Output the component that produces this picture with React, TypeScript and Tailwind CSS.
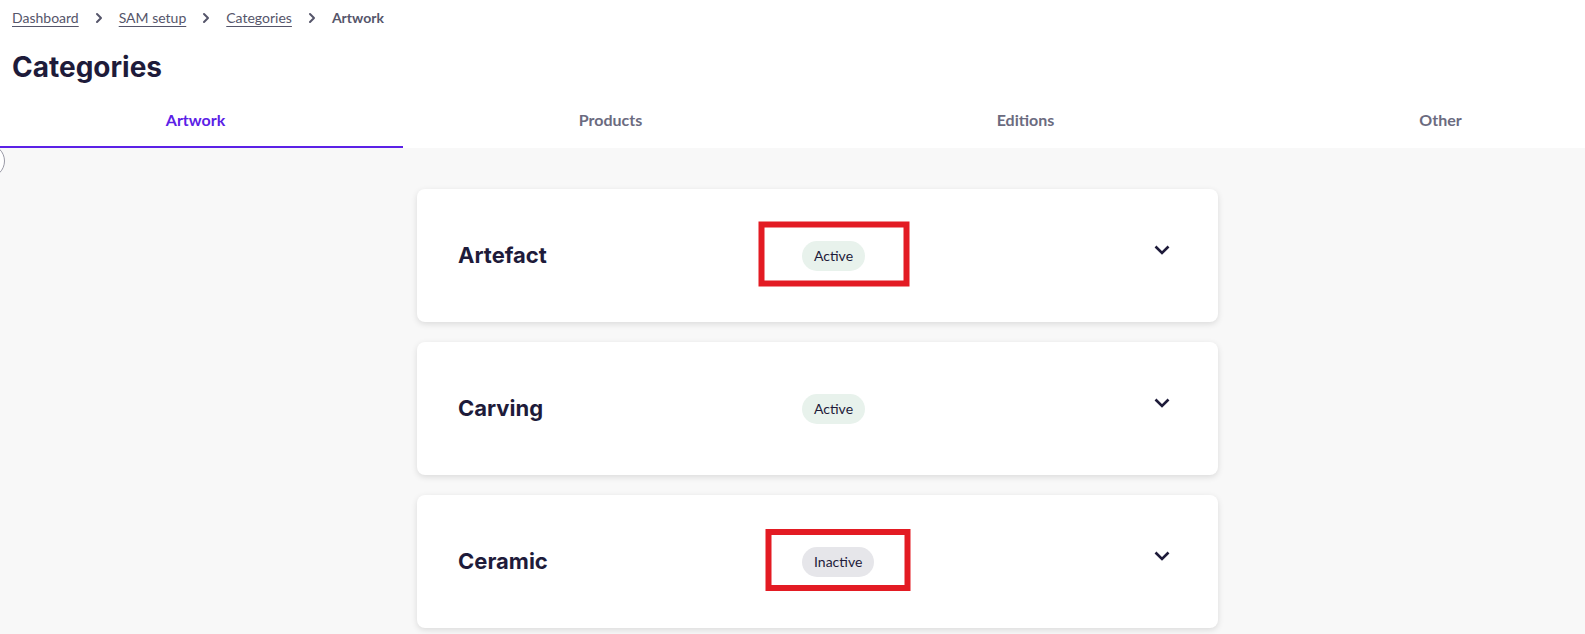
import { ChevronRight } from 'lucide-react';

type Category = {
  name: string;
  active: boolean;
  flagged?: boolean;
};

const crumbs = ['Dashboard', 'SAM setup', 'Categories'];
const tabs = ['Artwork', 'Products', 'Editions', 'Other'];

const categories: Category[] = [
  { name: 'Artefact', active: true, flagged: true },
  { name: 'Carving', active: true },
  { name: 'Ceramic', active: false, flagged: true },
];

function StatusBadge({ active }: { active: boolean }) {
  return (
    <span
      className={
        active
          ? 'inline-flex h-[30px] items-center rounded-full bg-[#e8f2ec] px-[12px] text-[14px] text-[#1e1b3a]'
          : 'inline-flex h-[30px] items-center rounded-full bg-[#e6e6ea] px-[12px] text-[14px] text-[#1e1b3a]'
      }
    >
      {active ? 'Active' : 'Inactive'}
    </span>
  );
}

function CategoryCard({ category }: { category: Category }) {
  return (
    <div className="flex h-[133px] w-[801px] items-center rounded-lg bg-white pl-[41px] pr-[48px] shadow-[0_2px_6px_rgba(0,0,0,0.12)]">
      <div className="w-[344px] text-[22px] font-bold text-[#1e1b3a] [font-family:Inter,sans-serif]">
        {category.name}
      </div>
      <div className="relative">
        <StatusBadge active={category.active} />
        {/* highlight frame drawn around the status */}
        {category.flagged &&
          (category.active ? (
            <div className="pointer-events-none absolute left-1/2 top-1/2 mt-[-2px] h-[65px] w-[151px] -translate-x-1/2 -translate-y-1/2 border-[6px] border-[#e31b23]" />
          ) : (
            <div className="pointer-events-none absolute left-1/2 top-1/2 mt-[-2px] h-[62px] w-[145px] -translate-x-1/2 -translate-y-1/2 border-[6px] border-[#e31b23]" />
          ))}
      </div>
      <div className="flex-1" />
      <div className="pb-[11px]">
        <svg width="16" height="10" viewBox="0 0 16 10" fill="none">
          <path d="M1.5 1.5 L8 8 L14.5 1.5" stroke="#1e1b3a" strokeWidth="2.6" />
        </svg>
      </div>
    </div>
  );
}

export default function App() {
  return (
    <div className="relative min-h-screen w-[1585px] overflow-hidden bg-[#f8f8f8] [font-family:Lato,sans-serif]">
      <div className="bg-white">
        <nav className="flex items-center px-[12px] pt-[8px] text-[14px] leading-[20px] text-[#55556a]">
          {crumbs.map((c) => (
            <span key={c} className="flex items-center">
              <span className="underline underline-offset-[3px]">{c}</span>
              <ChevronRight className="mx-[12px] h-[16px] w-[16px] text-[#55556a]" strokeWidth={3} />
            </span>
          ))}
          <span className="font-bold">Artwork</span>
        </nav>
        <h1 className="mt-[21px] px-[12px] text-[28px] leading-[36px] font-bold text-[#1e1b3a] [font-family:Inter,sans-serif]">
          Categories
        </h1>
        <div className="mt-[8px] flex h-[55px] -ml-[12px]">
          {tabs.map((t, i) => (
            <div
              key={t}
              className={
                i === 0
                  ? 'flex w-[415px] shrink-0 items-center justify-center border-b-2 border-[#5b21e6] text-[16px] font-bold text-[#5b21e6]'
                  : 'flex w-[415px] shrink-0 items-center justify-center border-b-2 border-transparent text-[16px] font-bold text-[#6b6b80]'
              }
            >
              {t}
            </div>
          ))}
        </div>
      </div>

      {/* collapsed side panel toggle peeking in from the left */}
      <div className="absolute left-[-29px] top-[144px] h-[34px] w-[34px] rounded-full border border-[#9a9aa6] bg-white" />

      <div className="flex flex-col gap-[20px] pl-[417px] pt-[41px] pb-[20px]">
        {categories.map((c) => (
          <CategoryCard key={c.name} category={c} />
        ))}
      </div>
    </div>
  );
}
